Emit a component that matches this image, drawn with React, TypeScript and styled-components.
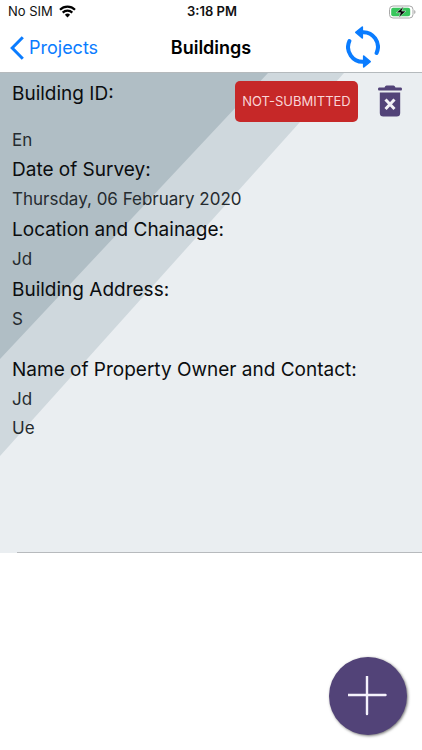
import React from "react";
import styled, { createGlobalStyle } from "styled-components";

const blue = "#0a7cff";
const purple = "#524378";

const GlobalStyle = createGlobalStyle`
  * { box-sizing: border-box; }
  body {
    margin: 0;
    background: #fff;
    color: #0b0d0f;
    font-family: Inter, "Liberation Sans", sans-serif;
  }
  button { font: inherit; border: 0; padding: 0; background: none; cursor: pointer; }
  svg { display: block; }
`;

const Screen = styled.div`
  display: flex;
  flex-direction: column;
  min-height: 100vh;
`;

const StatusBar = styled.div`
  display: grid;
  grid-template-columns: 1fr auto 1fr;
  align-items: center;
  height: 23px;
  padding: 0 6px 0 8px;
  font-size: 13px;
  line-height: 23px;
  color: #111;
`;

const Carrier = styled.div`
  display: flex;
  align-items: center;
  gap: 6px;
`;

const Clock = styled.time`
  font-weight: 600;
`;

const Power = styled.div`
  justify-self: end;
`;

const NavBar = styled.header`
  display: grid;
  grid-template-columns: 1fr auto 1fr;
  align-items: center;
  height: 50px;
  padding: 0 42px 0 10px;
  border-bottom: 1px solid #b5babd;
`;

const BackLink = styled.a`
  display: flex;
  align-items: center;
  gap: 5px;
  color: ${blue};
  font-size: 18px;
  text-decoration: none;
`;

const Title = styled.h1`
  margin: 0 0 0 32px;
  font-size: 18px;
  font-weight: 600;
  color: #000;
`;

const SyncButton = styled.button`
  justify-self: end;
  color: ${blue};
  && {
    padding-bottom: 2px;
  }
`;

const Card = styled.article`
  position: relative;
  isolation: isolate;
  min-height: 480px;
  padding: 6px 20px 24px 12px;
  overflow: hidden;
  background: #eaeef1;

  &::after {
    content: "";
    position: absolute;
    left: 17px;
    right: 0;
    bottom: 0;
    height: 1px;
    background: #b7babd;
  }
`;

const Stripes = styled.svg`
  position: absolute;
  z-index: -1;
  top: 0;
  left: 0;
`;

const CardHead = styled.div`
  display: flex;
  align-items: flex-start;
  height: 47px;
`;

const Label = styled.h2`
  flex: 1;
  margin: 0;
  font-size: 19px;
  font-weight: 400;
  line-height: 30px;
`;

const Value = styled.p`
  margin: 0;
  font-size: 17px;
  line-height: 29px;
  color: #252b2f;
`;

const Details = styled.div`
  display: flex;
  flex-direction: column;
  gap: 1px;
`;

const Section = styled.section<{ $spaced?: boolean }>`
  margin-top: ${(p) => (p.$spaced ? 20 : 0)}px;
`;

const StatusButton = styled.button`
  width: 123px;
  height: 41px;
  margin: 2px 20px 0 0;
  border-radius: 5px;
  && {
    padding-bottom: 2px;
    background: #c62828;
    color: #f9d5d7;
    font-size: 13px;
  }
`;

const DeleteButton = styled.button`
  margin-top: 6px;
  color: ${purple};
`;

const AddButton = styled.button`
  position: fixed;
  right: 15px;
  bottom: 15px;
  display: grid;
  place-items: center;
  width: 78px;
  height: 78px;
  border-radius: 50%;
  box-shadow: 1px 1px 3px rgba(0, 0, 0, 0.55);
  && {
    background: ${purple};
  }
`;

const WifiIcon = () => (
  <svg width="17" height="13" viewBox="0 0 17 13" fill="none" stroke="#000" strokeWidth="2.2" aria-label="Wi-Fi">
    <path d="M1 4.7a10.8 10.8 0 0 1 15 0M3.7 7.6a6.9 6.9 0 0 1 9.6 0" />
    <path d="M5.9 9.7a3.8 3.8 0 0 1 5.2 0L8.5 12.4z" fill="#000" stroke="none" />
  </svg>
);

const BatteryIcon = () => (
  <svg width="27" height="14" viewBox="0 0 27 14" aria-label="Battery charging">
    <rect x="0.5" y="1" width="23.5" height="12" rx="3.5" fill="#fff" stroke="#a8a8a8" />
    <rect x="2.2" y="2.7" width="19" height="8.6" rx="2" fill="#38c65c" />
    <path d="M25.2 5v4q1.3-.5 1.3-2t-1.3-2z" fill="#a8a8a8" />
    <path d="M14.7 1.3 7.3 7.7h4.2l-1.8 5 7.2-6.6h-4.2z" fill="#000" stroke="#fff" strokeWidth="0.5" />
  </svg>
);

const ChevronIcon = () => (
  <svg width="14" height="24" viewBox="0 0 14 24" fill="none" stroke="currentColor" strokeWidth="3" aria-hidden="true">
    <path d="M12.8 1.2 2.2 12l10.6 10.8" />
  </svg>
);

const SyncIcon = () => (
  <svg width="34" height="42" viewBox="0 0 34 42" fill="none" stroke="currentColor" strokeWidth="4" strokeLinecap="round" aria-hidden="true">
    <path d="M16 6.2A14.8 14.8 0 0 1 30.6 27" />
    <path d="M3.4 15A14.8 14.8 0 0 0 18 35.8" />
    <path d="M16.3 1v11L9.8 6.3z" fill="currentColor" strokeWidth="1.6" strokeLinejoin="round" />
    <path d="M17.7 30v11l6.5-5.3z" fill="currentColor" strokeWidth="1.6" strokeLinejoin="round" />
  </svg>
);

const TrashIcon = () => (
  <svg width="24" height="32" viewBox="0 0 24 32" aria-hidden="true">
    <path d="M8.5 .5h7q1.2 0 2 2H23q1 0 1 1.5t-1 1.5H1Q0 5.5 0 4t1-1.5h5.5q.8-2 2-2z" fill="currentColor" />
    <path d="M1.8 7.5h20.4V28q0 3.5-3.5 3.5H5.3q-3.5 0-3.5-3.5z" fill="currentColor" />
    <path d="m7.5 14.5 9 9.5M16.5 14.5l-9 9.5" stroke="#f2f1f6" strokeWidth="3" />
  </svg>
);

const PlusIcon = () => (
  <svg width="40" height="40" viewBox="0 0 40 40" fill="none" stroke="#f5f2fc" strokeWidth="2.4" strokeLinecap="round" aria-hidden="true">
    <path d="M19 .5v37.5M.5 19h37" />
  </svg>
);

const sections = [
  { label: "Date of Survey:", values: ["Thursday, 06 February 2020"] },
  { label: "Location and Chainage:", values: ["Jd"] },
  { label: "Building Address:", values: ["S"] },
  { label: "Name of Property Owner and Contact:", values: ["Jd", "Ue"], spaced: true },
];

export default function App() {
  return (
    <Screen>
      <GlobalStyle />
      <StatusBar>
        <Carrier>
          <span>No SIM</span>
          <WifiIcon />
        </Carrier>
        <Clock>3:18 PM</Clock>
        <Power>
          <BatteryIcon />
        </Power>
      </StatusBar>
      <NavBar>
        <BackLink href="#projects">
          <ChevronIcon />
          Projects
        </BackLink>
        <Title>Buildings</Title>
        <SyncButton type="button" aria-label="Sync">
          <SyncIcon />
        </SyncButton>
      </NavBar>
      <main>
        <Card>
          <Stripes width="344" height="383" viewBox="0 0 344 383" aria-hidden="true">
            <path d="M0 0h344L0 383z" fill="#cfd8dd" />
            <path d="M0 0h268L0 286z" fill="#b0bec5" />
          </Stripes>
          <CardHead>
            <Label>Building ID:</Label>
            <StatusButton type="button">NOT-SUBMITTED</StatusButton>
            <DeleteButton type="button" aria-label="Delete building">
              <TrashIcon />
            </DeleteButton>
          </CardHead>
          <Value>En</Value>
          <Details>
            {sections.map((s) => (
              <Section key={s.label} $spaced={s.spaced}>
                <Label>{s.label}</Label>
                {s.values.map((v) => (
                  <Value key={v}>{v}</Value>
                ))}
              </Section>
            ))}
          </Details>
        </Card>
      </main>
      <AddButton type="button" aria-label="Add building">
        <PlusIcon />
      </AddButton>
    </Screen>
  );
}
